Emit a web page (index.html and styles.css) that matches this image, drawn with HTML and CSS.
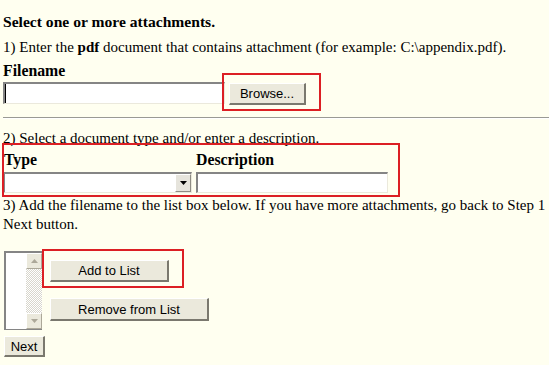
FILE: index.html
```html
<!DOCTYPE html>
<html>
<head>
<meta charset="utf-8">
<link rel="stylesheet" href="styles.css">
</head>
<body>
<div class="page">
  <div class="title">Select one or more attachments.</div>
  <div class="line step1">1) Enter the <b>pdf</b> document that contains attachment (for example: C:\appendix.pdf).</div>
  <div class="line label">Filename</div>
  <div class="filerow">
    <input class="field file" type="text">
    <button class="btn browse" type="button">Browse...</button>
  </div>
  <hr class="rule">
  <div class="line step2">2) Select a document type and/or enter a description.</div>
  <div class="typegrid">
    <div class="line label">Type</div>
    <div class="line label">Description</div>
    <div class="select">
      <span class="selval"></span>
      <span class="drop"><svg width="7" height="4" viewBox="0 0 7 4"><path d="M0 0H7L3.5 4Z" fill="#000"/></svg></span>
    </div>
    <input class="field desc" type="text">
  </div>
  <div class="line step3">3) Add the filename to the list box below. If you have more attachments, go back to Step 1<br>Next button.</div>
  <div class="listrow">
    <div class="listbox">
      <div class="listarea"></div>
      <div class="scroll">
        <span class="sbtn"><svg width="7" height="4" viewBox="0 0 7 4"><path d="M0 4H7L3.5 0Z" fill="#aca899"/></svg></span>
        <span class="track"></span>
        <span class="sbtn"><svg width="7" height="4" viewBox="0 0 7 4"><path d="M0 0H7L3.5 4Z" fill="#aca899"/></svg></span>
      </div>
    </div>
    <div class="listbtns">
      <button class="btn add" type="button">Add to List</button>
      <button class="btn remove" type="button">Remove from List</button>
    </div>
  </div>
  <button class="btn next" type="button">Next</button>

  <div class="mark mark1"></div>
  <div class="mark mark2"></div>
  <div class="mark mark3"></div>
</div>
</body>
</html>
```
FILE: styles.css
```css
html, body {
  margin: 0;
  padding: 0;
  overflow: hidden;
  background: #fffff0;
}
body {
  width: 549px;
  height: 365px;
  font-family: "Liberation Serif", "Times New Roman", serif;
  font-size: 15px;
  color: #000;
}
.page {
  position: relative;
  padding-left: 3px;
  height: 365px;
}
.line, .title {
  line-height: 19px;
  white-space: nowrap;
}
.title {
  font-weight: bold;
  font-size: 15.6px;
  padding-top: 12px;
}
.step1 { margin-top: 7px; }
.label {
  font-weight: bold;
  font-size: 15.8px;
}
.page > .label { margin-top: 4px; }
.filerow {
  display: flex;
  align-items: flex-start;
  margin-top: 2px;
  gap: 4px;
}
.field {
  box-sizing: border-box;
  margin: 0;
  height: 22px;
  background: #fff;
  border-style: solid;
  border-width: 2px 1px 1px 2px;
  border-color: #858585 #ebe9dc #ebe9dc #858585;
  padding: 0;
  outline: none;
}
.file {
  width: 222px;
  box-shadow: inset 1px 0 0 #000;
}
.btn {
  box-sizing: border-box;
  margin: 0;
  padding: 0;
  font-family: "Liberation Sans", Arial, sans-serif;
  font-size: 13px;
  color: #000;
  background: #ebe9dc;
  border-style: solid;
  border-width: 1px 2px 2px 1px;
  border-color: #ffffff #7a786e #7a786e #ffffff;
  text-align: center;
}
.browse {
  width: 77px;
  height: 22px;
  margin-top: 1px;
}
.rule {
  margin: 12px 0 0 0;
  border: 0;
  border-top: 1px solid #9a9a94;
  border-bottom: 1px solid #ffffff;
  height: 0;
}
.step2 { margin-top: 10px; }
.typegrid {
  display: grid;
  grid-template-columns: 193px 192px;
  margin-top: 2px;
}
.typegrid .label { margin-bottom: 3px; }
.typegrid .label:first-child { padding-left: 1px; }
.select {
  box-sizing: border-box;
  width: 189px;
  height: 21px;
  display: flex;
  background: #fff;
  border-style: solid;
  border-width: 2px 1px 1px 2px;
  border-color: #858585 #ebe9dc #ebe9dc #858585;
}
.selval { flex: 1; }
.drop {
  box-sizing: border-box;
  width: 16px;
  display: flex;
  align-items: center;
  justify-content: center;
  background: #e6e4dc;
  border-style: solid;
  border-width: 1px;
  border-color: #ffffff #8f8d84 #8f8d84 #ffffff;
}
.desc {
  width: 192px;
  height: 21px;
}
.step3 { margin-top: 3px; }
.listrow {
  display: flex;
  align-items: flex-start;
  margin-top: 17px;
  margin-left: 1px;
}
.listbox {
  box-sizing: border-box;
  width: 38px;
  height: 79px;
  display: flex;
  background: #fff;
  border-style: solid;
  border-width: 2px 0 1px 2px;
  border-color: #858585;
}
.listarea { flex: 1; }
.scroll {
  width: 16px;
  display: flex;
  flex-direction: column;
}
.sbtn {
  box-sizing: border-box;
  height: 16px;
  display: flex;
  align-items: center;
  justify-content: center;
  background: #ebe9dc;
  border-style: solid;
  border-width: 1px;
  border-color: #ffffff #aca899 #aca899 #ffffff;
}
.track {
  flex: 1;
  background: repeating-conic-gradient(#ffffff 0 25%, #d8d6cc 0 50%) 0 0 / 2px 2px;
}
.listbtns {
  display: flex;
  flex-direction: column;
  align-items: flex-start;
  gap: 16px;
  margin-left: 8px;
  padding-top: 9px;
}
.add { width: 119px; height: 22px; }
.remove { width: 159px; height: 23px; }
.next {
  display: block;
  width: 41px;
  height: 21px;
  margin-top: 6px;
  margin-left: 1px;
}
.mark {
  position: absolute;
  box-sizing: border-box;
  border: 2px solid #dc1f24;
}
.mark1 { left: 222px; top: 73px; width: 99px; height: 38px; }
.mark2 { left: 2px; top: 143px; width: 398px; height: 54px; }
.mark3 { left: 42px; top: 249px; width: 142px; height: 39px; }
```
